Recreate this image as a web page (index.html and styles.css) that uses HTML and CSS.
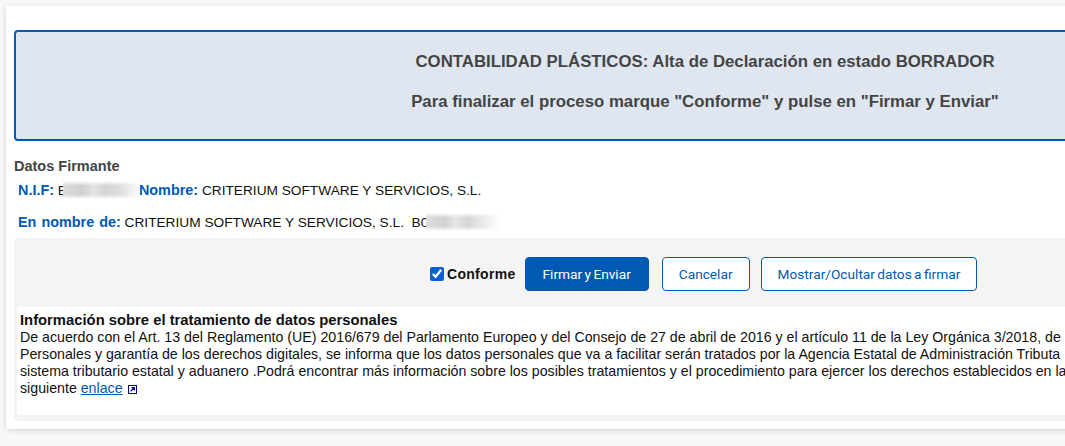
FILE: index.html
```html
<!DOCTYPE html>
<html lang="es">
<head>
<meta charset="utf-8">
<title>Contabilidad Plásticos</title>
<link rel="stylesheet" href="styles.css">
</head>
<body>
<main class="card">
  <section class="banner">
    <p class="banner-line">CONTABILIDAD PLÁSTICOS: Alta de Declaración en estado BORRADOR</p>
    <p class="banner-line">Para finalizar el proceso marque "Conforme" y pulse en "Firmar y Enviar"</p>
  </section>
  <h2 class="section-title">Datos Firmante</h2>
  <p class="data-row"><b class="key">N.I.F:</b> B<span class="redact redact-a"></span><b class="key">Nombre:</b> CRITERIUM SOFTWARE Y SERVICIOS, S.L.</p>
  <p class="data-row data-row-second"><b class="key">En nombre de:</b> CRITERIUM SOFTWARE Y SERVICIOS, S.L.&nbsp; B0<span class="redact redact-b"></span></p>
  <section class="panel">
    <div class="actions">
      <label class="check"><input type="checkbox" checked> Conforme</label>
      <button class="btn btn-primary" type="button">Firmar y Enviar</button>
      <button class="btn" type="button">Cancelar</button>
      <button class="btn" type="button">Mostrar/Ocultar datos a firmar</button>
    </div>
    <div class="info">
      <h3 class="info-title">Información sobre el tratamiento de datos personales</h3>
      <p class="info-text">De acuerdo con el Art. 13 del Reglamento (UE) 2016/679 del Parlamento Europeo y del Consejo de 27 de abril de 2016 y el artículo 11 de la Ley Orgánica 3/2018, de<br>
      Personales y garantía de los derechos digitales, se informa que los datos personales que va a facilitar serán tratados por la Agencia Estatal de Administración Tributa<br>
      sistema tributario estatal y aduanero .Podrá encontrar más información sobre los posibles tratamientos y el procedimiento para ejercer los derechos establecidos en la<br>
      siguiente <a class="link" href="#">enlace</a> <svg class="ext" viewBox="0 0 9 9" width="9" height="9" aria-hidden="true"><rect x="0.5" y="0.5" width="8" height="8" fill="none" stroke="#0000a0"/><path d="M2.6 6.4 L6 3 M3.4 2.6 H6.4 V5.6" fill="none" stroke="#0000a0" stroke-width="1.1"/></svg></p>
    </div>
  </section>
</main>
</body>
</html>
```
FILE: styles.css
```css
html, body {
  margin: 0;
  height: 446px;
  overflow: hidden;
  background: #f8f8f8;
}
body {
  padding: 6px 0 0 6px;
  box-sizing: border-box;
  font-family: "Liberation Sans", Arial, sans-serif;
  color: #111;
}
.card {
  width: 1398px;
  height: 423px;
  box-sizing: border-box;
  padding: 24px 8px 0;
  background: #fff;
  box-shadow: 0 1px 6px rgba(0, 0, 0, 0.16);
}
.banner {
  height: 111px;
  box-sizing: border-box;
  padding-top: 21px;
  background: #dfe6f0;
  border: 2px solid #0059b3;
  border-radius: 4px;
  text-align: center;
}
.banner-line {
  margin: 0 0 22px;
  font-size: 16.8px;
  line-height: 18px;
  font-weight: 700;
  color: #444;
}
.section-title {
  margin: 17px 0 0;
  font-size: 14.5px;
  line-height: 16px;
  font-weight: 700;
  color: #444;
}
.data-row {
  height: 16px;
  margin: 7px 0 0 4px;
  font-size: 13.7px;
  line-height: 16px;
  white-space: nowrap;
}
.data-row-second {
  margin-top: 16px;
}
.key {
  font-size: 14.4px;
  word-spacing: 1px;
  color: #0059b3;
}
.redact {
  display: inline-block;
  height: 18px;
  vertical-align: -4px;
  -webkit-mask-image: linear-gradient(to bottom, transparent, #000 25%, #000 75%, transparent);
  mask-image: linear-gradient(to bottom, transparent, #000 25%, #000 75%, transparent);
}
.redact-a {
  width: 76px;
  margin-left: -4px;
  background: linear-gradient(to right, #dcdcdc, #cfcfcf 25%, #e4e4e4 40%, #d4d4d4 55%, #dedede 75%, #f6f6f6 95%, #fff);
}
.redact-b {
  width: 75px;
  margin-left: -2px;
  background: linear-gradient(to right, #dddddd, #d2d2d2 25%, #e6e6e6 40%, #d6d6d6 55%, #e6e6e6 72%, #fff);
}
.panel {
  margin-top: 9px;
  height: 183px;
  box-sizing: border-box;
  padding: 0 0 6px 3px;
  background: #f4f4f4;
  border-radius: 4px;
  display: flex;
  flex-direction: column;
}
.actions {
  height: 69px;
  box-sizing: border-box;
  padding: 19px 0 0 413px;
  display: flex;
  align-items: flex-start;
}
.check {
  display: flex;
  align-items: center;
  height: 34px;
  margin-right: 9px;
  font-size: 14px;
  font-weight: 700;
  letter-spacing: 0.3px;
}
.check input {
  width: 14px;
  height: 14px;
  margin: 0 3px 0 0;
  accent-color: #0a60d0;
}
.btn {
  height: 34px;
  padding: 0 16px;
  margin-right: 11px;
  background: #fff;
  color: #0059b3;
  border: 1px solid #0059b3;
  border-radius: 4px;
  font-family: Roboto, sans-serif;
  font-size: 13.7px;
  word-spacing: -1px;
}
.btn-primary {
  padding: 0 17px;
  margin-right: 13px;
  background: #0059b3;
  color: #fff;
}
.info {
  flex: 1;
  padding: 5px 0 0 3px;
  background: #fff;
  font-size: 14.2px;
  line-height: 17.1px;
  white-space: nowrap;
}
.info-title {
  margin: 0;
  font-size: 14.8px;
  line-height: 17px;
  font-weight: 700;
}
.info-text {
  margin: 0;
}
.link {
  color: #0059b3;
}
.ext {
  vertical-align: -1px;
  margin-left: 1px;
}
```
